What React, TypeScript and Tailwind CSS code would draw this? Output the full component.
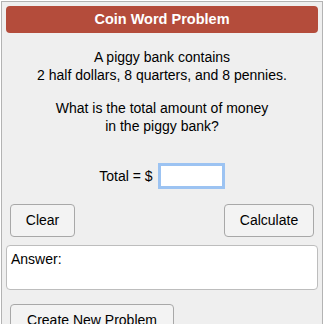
import React from "react";

export default function App() {
  return (
    <div className="mx-[1px] mt-[1px] border border-[#b3b3b3] bg-[#efefef] p-1 pb-6 font-['Liberation_Sans',Arial,sans-serif] text-[14px] text-black">
      {/* Header */}
      <div className="flex h-[27px] items-center justify-center rounded-[4px] bg-[#b44c3b] text-[14.5px] font-bold text-white">
        Coin Word Problem
      </div>

      {/* Question */}
      <div className="mt-[15px] text-center leading-[18px]">
        <p>A piggy bank contains</p>
        <p>2 half dollars, 8 quarters, and 8 pennies.</p>
        <p className="mt-[15px]">What is the total amount of money</p>
        <p>in the piggy bank?</p>
      </div>

      {/* Total input */}
      <div className="mt-[28px] flex items-center justify-center gap-[5px]">
        <span>Total = $</span>
        <input
          type="text"
          className="h-[26px] w-[67px] border-[3px] border-[#9cc3f2] bg-white px-1 outline-none"
        />
      </div>

      {/* Buttons */}
      <div className="mt-[15px] flex justify-between px-1">
        <button className="h-[33px] w-[65px] rounded-[4px] border border-[#a8a8a8] bg-[#f3f3f3] text-[14px]">
          Clear
        </button>
        <button className="h-[33px] w-[90px] rounded-[4px] border border-[#a8a8a8] bg-[#f3f3f3] text-[14px]">
          Calculate
        </button>
      </div>

      {/* Answer */}
      <div className="mt-[8px] h-[45px] rounded-[4px] border border-[#bdbdbd] bg-white px-[4px] pt-[4px] leading-[18px]">
        Answer:
      </div>

      <div className="mt-[14px] px-1">
        <button className="h-[33px] w-[164px] rounded-[4px] border border-[#a8a8a8] bg-[#f3f3f3] text-[14px]">
          Create New Problem
        </button>
      </div>
    </div>
  );
}
